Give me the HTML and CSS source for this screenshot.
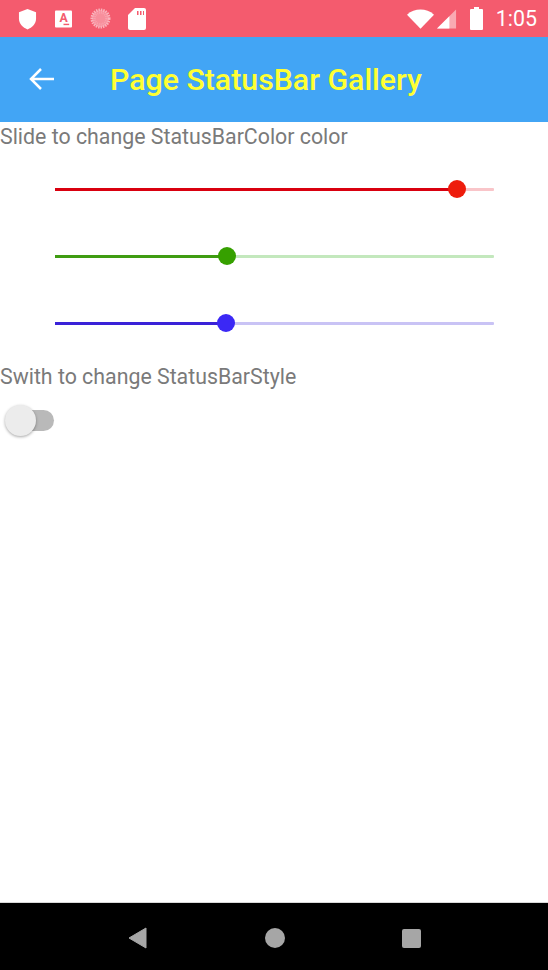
FILE: index.html
```html
<!DOCTYPE html>
<html lang="en">
<head>
    <meta charset="UTF-8">
    <meta name="viewport" content="width=device-width, initial-scale=1.0">
    <title>Page StatusBar Gallery</title>
    <link rel="stylesheet" href="styles.css">
</head>
<body>
    <div class="phone">
        <div class="status-bar">
            <div class="status-left">
                <svg width="19" height="24" viewBox="0 0 20 24"><path d="M10 1.500 L19 5 V11.500 C19 17 15 21 10 23 C5 21 1 17 1 11.500 V5 Z" fill="#fff"/></svg>
                <svg width="17" height="18" viewBox="0 0 18 18"><rect width="18" height="18" rx="1" fill="#fff"/><text x="9" y="12" class="app-letter">A</text><rect x="9" y="14" width="6" height="1.500" fill="#f45b6e"/></svg>
                <svg width="21" height="21" viewBox="0 0 22 22"><circle cx="11" cy="11" r="9" fill="#f78f9c" stroke="#fab4bd" stroke-width="3" stroke-dasharray="1.500 1"/><circle cx="11" cy="11" r="6" fill="none" stroke="#f9a3ae" stroke-width="2" stroke-dasharray="1 1"/></svg>
                <svg class="sd" width="18" height="22" viewBox="0 0 18 22"><path d="M7 0 H16 A2 2 0 0 1 18 2 V20 A2 2 0 0 1 16 22 H2 A2 2 0 0 1 0 20 V7 Z" fill="#fff"/><path d="M9 3 H10.500 V7 H9 Z M12 3 H13.500 V7 H12 Z M15 3 H16 V7 H15 Z" fill="#f45b6e"/></svg>
            </div>
            <div class="status-right">
                <svg width="27" height="20" viewBox="0 0 28 20"><path d="M0 5.500 C8 -1.500 20 -1.500 28 5.500 L14 20 Z" fill="#fff"/></svg>
                <svg class="signal" width="20" height="20" viewBox="0 0 21 20"><path d="M0 20 L20 0 V20 Z" fill="#f9a9b3"/><path d="M0 20 L13 7 V20 Z" fill="#fff"/></svg>
                <svg width="13" height="23" viewBox="0 0 13 23"><path d="M4 0 H9 V2 H12 A1 1 0 0 1 13 3 V22 A1 1 0 0 1 12 23 H1 A1 1 0 0 1 0 22 V3 A1 1 0 0 1 1 2 H4 Z" fill="#fff"/></svg>
                <span class="clock">1:05</span>
            </div>
        </div>

        <div class="toolbar">
            <svg width="26" height="24" viewBox="0 0 26 24"><path d="M25 12 H2 M12 2 L2 12 L12 22" fill="none" stroke="#fff" stroke-width="2.500"/></svg>
            <h1>Page StatusBar Gallery</h1>
        </div>

        <div class="content">
            <p class="label">Slide to change StatusBarColor color</p>
            <div class="sliders">
                <div class="slider red"><div class="fill" style="width: 91.6%"><span class="thumb"></span></div></div>
                <div class="slider green"><div class="fill" style="width: 39.1%"><span class="thumb"></span></div></div>
                <div class="slider blue"><div class="fill" style="width: 38.9%"><span class="thumb"></span></div></div>
            </div>
            <p class="label">Swith to change StatusBarStyle</p>
            <div class="switch"><span class="knob"></span></div>
        </div>

        <div class="nav-bar">
            <svg width="20" height="22" viewBox="0 0 20 22"><path d="M18 1 V21 L1 11 Z" fill="#a6a6a6" stroke="#a6a6a6" stroke-width="1" stroke-linejoin="round"/></svg>
            <span class="nav-home"></span>
            <span class="nav-square"></span>
        </div>
    </div>
</body>
</html>
```

FILE: styles.css
```css
body {
    margin: 0;
    font-family: Roboto, "Liberation Sans", sans-serif;
    background: #fff;
}
.phone {
    width: 548px;
    height: 970px;
    display: flex;
    flex-direction: column;
    overflow: hidden;
}
.status-bar {
    height: 37px;
    background: #f45b6e;
    display: flex;
    justify-content: space-between;
    align-items: center;
    padding: 0 11px 0 18px;
}
.status-left {
    display: flex;
    align-items: center;
    gap: 18px;
}
.sd {
    margin-left: -1px;
}
.status-right {
    display: flex;
    align-items: center;
    gap: 13px;
}
.signal {
    margin-left: -10px;
}
.app-letter {
    font-size: 13px;
    font-weight: 700;
    fill: #f45b6e;
    text-anchor: middle;
}
.clock {
    color: #fff;
    font-size: 21.33px;
}
.toolbar {
    height: 85px;
    background: #42a5f5;
    display: flex;
    align-items: center;
    padding: 0 0 2px 29px;
    box-sizing: border-box;
}
.toolbar h1 {
    margin: 2px 0 0 55px;
    color: #ffff33;
    font-size: 30.3px;
    font-weight: 500;
}
.content {
    flex: 1;
}
.label {
    margin: 0;
    color: #7a7a7a;
    font-size: 21.33px;
    line-height: 30px;
}
.sliders {
    padding: 36px 54px 0 55px;
    display: flex;
    flex-direction: column;
    gap: 64px;
    margin-bottom: 37px;
}
.slider {
    height: 3px;
    border-radius: 1px;
}
.fill {
    height: 100%;
    position: relative;
}
.thumb {
    position: absolute;
    right: -9px;
    top: -8px;
    width: 18px;
    height: 18px;
    border-radius: 50%;
}
.red { background: #f9c5c9; }
.red .fill { background: #d9000f; }
.red .thumb { background: #ee1c0c; }
.green { background: #c3e8bd; }
.green .fill { background: #3f9c12; }
.green .thumb { background: #36a000; }
.blue { background: #c9c3f5; }
.blue .fill { background: #3a22d8; }
.blue .thumb { background: #3b28f5; }
.switch {
    position: relative;
    width: 34px;
    height: 21px;
    margin: 18px 0 0 20px;
    border-radius: 10.5px;
    background: #b9b9b9;
}
.knob {
    position: absolute;
    left: -15px;
    top: -5px;
    width: 31px;
    height: 31px;
    border-radius: 50%;
    background: #ececec;
    box-shadow: 0 1px 3px rgba(0, 0, 0, 0.35);
}
.nav-bar {
    height: 68px;
    background: #000;
    border-top: 1px solid #d8d8d8;
    box-sizing: border-box;
    display: flex;
    align-items: center;
    padding: 3px 127px 0 128px;
    justify-content: space-between;
}
.nav-home {
    width: 20px;
    height: 20px;
    border-radius: 50%;
    background: #a6a6a6;
}
.nav-square {
    width: 19px;
    height: 19px;
    border-radius: 2px;
    background: #a6a6a6;
}
```
